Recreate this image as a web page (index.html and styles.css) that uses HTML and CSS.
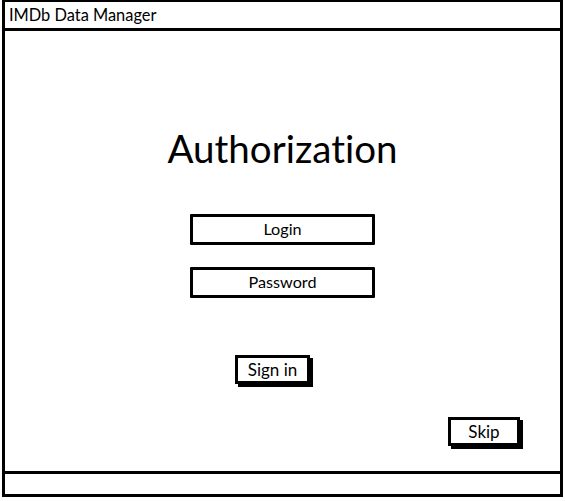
FILE: index.html
```html
<!DOCTYPE html>
<html>
<head>
<meta charset="utf-8">
<link rel="stylesheet" href="styles.css">
</head>
<body>
<div class="window">
  <div class="titlebar">IMDb Data Manager</div>
  <div class="main">
    <h1 class="heading">Authorization</h1>
    <div class="field">Login</div>
    <div class="field field-second">Password</div>
    <button class="btn btn-signin">Sign in</button>
    <div class="skip-row">
      <button class="btn btn-skip">Skip</button>
    </div>
  </div>
  <div class="footer"></div>
</div>
</body>
</html>
```

FILE: styles.css
```css
html, body {
  margin: 0;
  padding: 0;
  background: #fff;
}
body {
  font-family: "Lato", "Open Sans", sans-serif;
  font-variant-ligatures: none;
  color: #000;
}
.window {
  margin-left: 2px;
  width: 561px;
  height: 497px;
  box-sizing: border-box;
  border: 3px solid #000;
  border-top-width: 2px;
  display: flex;
  flex-direction: column;
}
.titlebar {
  height: 29px;
  box-sizing: border-box;
  border-bottom: 3px solid #000;
  font-size: 16.4px;
  line-height: 26px;
  padding-left: 4px;
}
.main {
  flex: 1;
  display: flex;
  flex-direction: column;
  align-items: center;
  padding-top: 93px;
  box-sizing: border-box;
}
.heading {
  margin: 0;
  font-size: 38.5px;
  font-weight: 400;
  line-height: 48px;
  font-variant-ligatures: none;
}
.field {
  margin-top: 42px;
  width: 185px;
  height: 31px;
  box-sizing: border-box;
  border: 3px solid #000;
  border-radius: 1px;
  font-size: 16.2px;
  line-height: 24px;
  text-align: center;
}
.field-second {
  margin-top: 22px;
}
.btn {
  font-family: inherit;
  font-variant-ligatures: none;
  background: #fff;
  color: #000;
  border: 3px solid #000;
  box-shadow: 3px 3px 0 #000;
  padding: 0;
  box-sizing: border-box;
  font-size: 17px;
  cursor: pointer;
}
.btn-signin {
  margin-top: 57px;
  margin-right: 20px;
  width: 75px;
  height: 29px;
  line-height: 23px;
}
.skip-row {
  align-self: stretch;
  display: flex;
  justify-content: flex-end;
  padding-right: 40px;
  margin-top: 33px;
}
.btn-skip {
  width: 72px;
  height: 29px;
  line-height: 23px;
}
.footer {
  height: 23px;
  box-sizing: border-box;
  border-top: 3px solid #000;
}
```
